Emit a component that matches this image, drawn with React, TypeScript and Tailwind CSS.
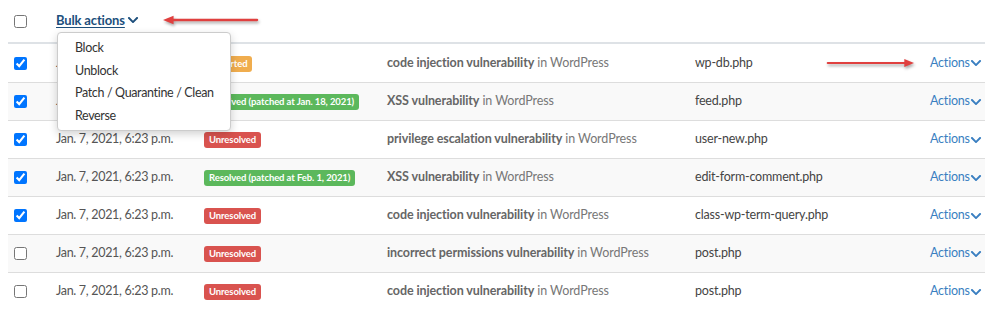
import React from "react";

type Row = {
  checked: boolean;
  date: string;
  badge: { text: string; color: string };
  vuln: string;
  file: string;
};

const RED = "bg-[#d9534f]";
const GREEN = "bg-[#5cb85c]";
const ORANGE = "bg-[#f0ad4e]";

const rows: Row[] = [
  { checked: true, date: "Jan. 7, 2021, 6:23 p.m.", badge: { text: "Reported", color: ORANGE }, vuln: "code injection vulnerability", file: "wp-db.php" },
  { checked: true, date: "Jan. 7, 2021, 6:23 p.m.", badge: { text: "Resolved (patched at Jan. 18, 2021)", color: GREEN }, vuln: "XSS vulnerability", file: "feed.php" },
  { checked: true, date: "Jan. 7, 2021, 6:23 p.m.", badge: { text: "Unresolved", color: RED }, vuln: "privilege escalation vulnerability", file: "user-new.php" },
  { checked: true, date: "Jan. 7, 2021, 6:23 p.m.", badge: { text: "Resolved (patched at Feb. 1, 2021)", color: GREEN }, vuln: "XSS vulnerability", file: "edit-form-comment.php" },
  { checked: true, date: "Jan. 7, 2021, 6:23 p.m.", badge: { text: "Unresolved", color: RED }, vuln: "code injection vulnerability", file: "class-wp-term-query.php" },
  { checked: false, date: "Jan. 7, 2021, 6:23 p.m.", badge: { text: "Unresolved", color: RED }, vuln: "incorrect permissions vulnerability", file: "post.php" },
  { checked: false, date: "Jan. 7, 2021, 6:23 p.m.", badge: { text: "Unresolved", color: RED }, vuln: "code injection vulnerability", file: "post.php" },
];

function Chevron({ className }: { className?: string }) {
  return (
    <svg viewBox="0 0 448 512" className={className} fill="currentColor" aria-hidden="true">
      <path d="M207.029 381.476L12.686 187.132c-9.373-9.373-9.373-24.569 0-33.941l22.667-22.667c9.357-9.357 24.522-9.375 33.901-.04L224 284.505l154.745-154.021c9.379-9.335 24.544-9.317 33.901.04l22.667 22.667c9.373 9.373 9.373 24.569 0 33.941L240.971 381.476c-9.373 9.372-24.569 9.372-33.942 0z" />
    </svg>
  );
}

function Arrow({ dir, className }: { dir: "left" | "right"; className?: string }) {
  return (
    <svg viewBox="0 0 100 12" className={className} aria-hidden="true" style={{ filter: "drop-shadow(1px 2px 1.5px rgba(0,0,0,0.35))" }}>
      {dir === "left" ? (
        <>
          <line x1="8" y1="6" x2="98" y2="6" stroke="#e0403f" strokeWidth="2.4" strokeLinecap="round" />
          <polygon points="0,6 11,1.5 11,10.5" fill="#e0403f" />
        </>
      ) : (
        <>
          <line x1="2" y1="6" x2="92" y2="6" stroke="#e0403f" strokeWidth="2.4" strokeLinecap="round" />
          <polygon points="100,6 89,1.5 89,10.5" fill="#e0403f" />
        </>
      )}
    </svg>
  );
}

export default function App() {
  return (
    <div className="relative w-[998px] h-[311px] bg-white overflow-hidden text-[12.5px]" style={{ fontFamily: "Lato, 'Noto Sans', sans-serif" }}>
      <div className="ml-[8px] w-[977px]">
        {/* header */}
        <div className="flex items-center h-[44px] border-b-2 border-[#dee2e6]">
          <div className="w-[40px] pl-[6px] flex items-center">
            <input type="checkbox" className="m-0 w-[13px] h-[13px]" />
          </div>
          <div className="relative pl-[8px] flex items-center">
            <span className="text-[13px] tracking-[-0.15px] font-bold text-[#1d4f7c] underline underline-offset-2 decoration-[#1d4f7c]">Bulk actions</span>
            <Chevron className="w-[12px] h-[12px] ml-[2px] -mt-[2px] text-[#1d4f7c]" />
          </div>
        </div>
        {/* rows */}
        {rows.map((r, i) => (
          <div
            key={i}
            className={`flex items-center h-[38px] ${i > 0 ? "border-t border-[#dddddd]" : ""} ${i % 2 === 1 ? "bg-[#f9f9f9]" : "bg-white"}`}
          >
            <div className="w-[40px] pl-[6px] flex items-center">
              <input type="checkbox" defaultChecked={r.checked} className="m-0 w-[13px] h-[13px]" />
            </div>
            <div className="w-[148px] pl-[8px] text-[#555555] whitespace-nowrap tracking-[-0.3px]">{r.date}</div>
            <div className="w-[183px] pl-[8px]">
              <span className={`inline-flex items-center h-[16px] px-[5px] rounded-[3px] text-[9.5px] tracking-[-0.1px] font-bold text-white whitespace-nowrap ${r.badge.color}`}>
                {r.badge.text}
              </span>
            </div>
            <div className="w-[308px] pl-[8px] whitespace-nowrap text-[#777777] tracking-[-0.1px]">
              <span className="font-bold text-[#666666]">{r.vuln}</span> in WordPress
            </div>
            <div className="w-[235px] pl-[8px] text-[#444444] whitespace-nowrap tracking-[-0.2px]">{r.file}</div>
            <div className="flex-1 pl-[8px] flex items-center text-[#3a7fc1] tracking-[-0.2px]">
              <span>Actions</span>
              <Chevron className="w-[12px] h-[12px] text-[#3a7fc1]" />
            </div>
          </div>
        ))}
      </div>

      {/* dropdown menu overlay */}
      <div className="absolute left-[57px] top-[32px] w-[174px] h-[99px] bg-white border border-[#cccccc] rounded-[4px] shadow-[0_3px_8px_rgba(0,0,0,0.18)] pt-[4px] text-[#333333] tracking-[-0.35px]">
        <div className="pl-[17px] leading-[22.5px]">Block</div>
        <div className="pl-[17px] leading-[22.5px]">Unblock</div>
        <div className="pl-[17px] leading-[22.5px] whitespace-nowrap">Patch / Quarantine / Clean</div>
        <div className="pl-[17px] leading-[22.5px]">Reverse</div>
      </div>

      {/* annotation arrows */}
      <Arrow dir="left" className="absolute left-[163px] top-[14px] w-[96px] h-[12px]" />
      <Arrow dir="right" className="absolute left-[826px] top-[57px] w-[88px] h-[12px]" />
    </div>
  );
}
